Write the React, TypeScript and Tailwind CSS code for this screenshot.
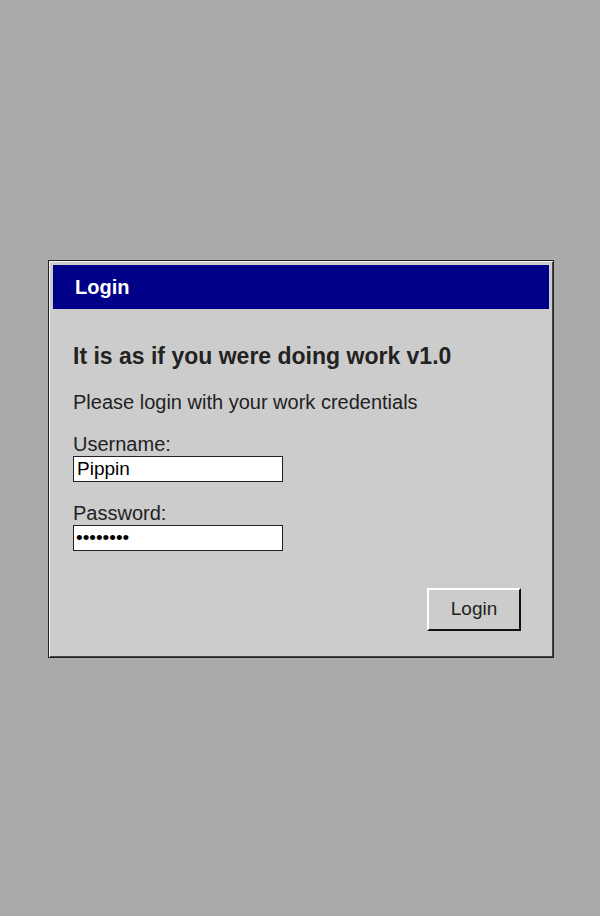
import React from "react";

export default function App() {
  return (
    <div
      className="min-h-[916px] w-full bg-[#aaaaaa] flex items-center justify-center"
      style={{ fontFamily: '"Liberation Sans", Arial, sans-serif' }}
    >
      <div className="ml-[2px] mt-[2px] w-[506px] border border-[#222] bg-[#cccccc] p-[4px] shadow-[inset_1px_1px_0_#f2f2f2,inset_-1px_-1px_0_#444]">
        <div className="h-[44px] bg-[#000088] flex items-center pl-[22px] text-white font-bold text-[20px] leading-[24px]">
          Login
        </div>
        <div className="px-[20px] pt-[35px] pb-[22px] text-[#222]">
          <h1 className="text-[23px] leading-[24px] font-bold">It is as if you were doing work v1.0</h1>
          <p className="mt-[23px] text-[20px] leading-[22px]">Please login with your work credentials</p>
          <div className="mt-[20px] flex flex-col gap-[1px]">
            <label className="text-[20px] leading-[22px]">Username:</label>
            <input
              type="text"
              defaultValue="Pippin"
              className="w-[210px] h-[26px] border border-[#222] bg-white px-[3px] text-[19px] text-black outline-none"
              style={{ fontFamily: '"Liberation Sans", Arial, sans-serif' }}
            />
          </div>
          <div className="mt-[20px] flex flex-col gap-[1px]">
            <label className="text-[20px] leading-[22px]">Password:</label>
            <input
              type="password"
              defaultValue="Pippin12"
              className="w-[210px] h-[26px] border border-[#222] bg-white px-[2px] text-[19px] text-black outline-none"
              style={{ fontFamily: '"Liberation Sans", Arial, sans-serif' }}
            />
          </div>
          <div className="mt-[37px] flex justify-end pr-[8px]">
            <button className="w-[94px] h-[43px] bg-[#cccccc] border-2 border-t-white border-l-white border-b-[#111] border-r-[#111] text-[19px] text-[#222]">
              Login
            </button>
          </div>
        </div>
      </div>
    </div>
  );
}
